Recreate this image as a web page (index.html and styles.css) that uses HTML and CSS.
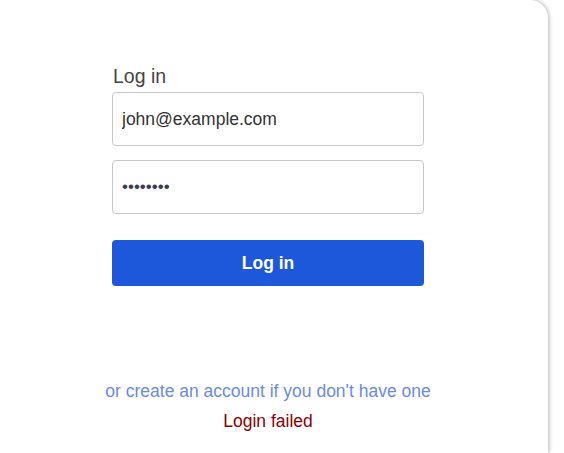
FILE: index.html
```html
<!DOCTYPE html>
<html>
<head>
<meta charset="utf-8">
<link rel="stylesheet" href="styles.css">
</head>
<body>
<div class="card">
  <form class="login">
    <label class="title" for="email">Log in</label>
    <input id="email" class="field" type="text" value="john@example.com">
    <input class="field pw" type="password" value="12345678">
    <button type="button" class="btn">Log in</button>
  </form>
  <div class="foot">
    <a class="link" href="#">or create an account if you don't have one</a>
    <div class="error">Login failed</div>
  </div>
</div>
</body>
</html>
```
FILE: styles.css
```css
html, body {
  margin: 0;
  padding: 0;
  background: #ffffff;
  font-family: "Liberation Sans", Arial, sans-serif;
  overflow: hidden;
}
.card {
  width: 560px;
  height: 453px;
  margin-left: -12px;
  background: #fff;
  border-top-right-radius: 18px;
  box-shadow: 1px 0 4px rgba(0, 0, 0, 0.3);
  display: flex;
  flex-direction: column;
  align-items: center;
}
.login {
  width: 312px;
  display: flex;
  flex-direction: column;
  padding-top: 64px;
}
.title {
  font-size: 19.5px;
  color: #444;
  line-height: 24px;
  margin-bottom: 4px;
  margin-left: 1px;
}
.field {
  box-sizing: border-box;
  height: 54px;
  width: 312px;
  border: 1px solid #c8c8c8;
  border-radius: 4px;
  padding: 0 9px;
  font-family: "Liberation Sans", Arial, sans-serif;
  font-size: 17.5px;
  color: #333;
  margin: 0;
  outline: none;
}
.pw {
  margin-top: 14px;
  font-size: 17px;
  color: #3c3c50;
}
.btn {
  margin-top: 26px;
  height: 46px;
  border: none;
  border-radius: 4px;
  background: #1c58d9;
  color: #fff;
  font-family: "Liberation Sans", Arial, sans-serif;
  font-weight: bold;
  font-size: 17.5px;
}
.foot {
  margin-top: 90px;
  display: flex;
  flex-direction: column;
  align-items: center;
  font-size: 17.5px;
  line-height: 30px;
}
.link {
  color: #6b8ae8;
  text-decoration: none;
}
.error {
  color: #8b0000;
}
```
